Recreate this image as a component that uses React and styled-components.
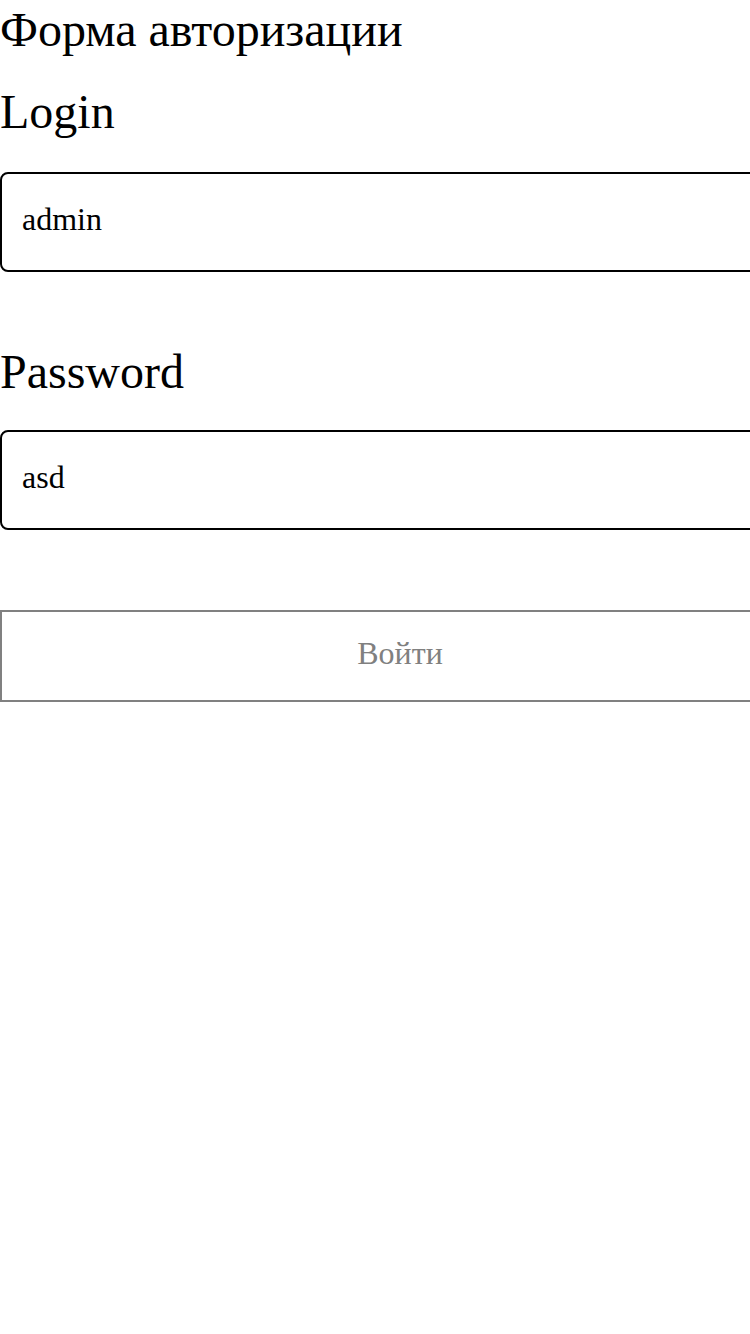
import styled, { createGlobalStyle } from 'styled-components'

const GlobalStyle = createGlobalStyle`
  html, body {
    margin: 0;
    padding: 0;
    overflow-x: hidden;
    background: #ffffff;
  }
  body {
    font-family: 'Liberation Serif', 'Times New Roman', serif;
    color: #000000;
  }
`

const Form = styled.form`
  display: flex;
  flex-direction: column;
  width: 800px;
`

const Title = styled.h1`
  margin: 2px 0 0;
  font-size: 48px;
  font-weight: normal;
  line-height: 55px;
`

const Field = styled.label`
  display: flex;
  flex-direction: column;
  gap: ${(p) => p.$gap}px;
  margin-top: ${(p) => p.$top}px;
`

const Label = styled.span`
  font-size: 48px;
  line-height: 55px;
`

const Input = styled.input`
  box-sizing: border-box;
  width: 100%;
  height: 100px;
  padding: 0 20px 6px;
  border: 2px solid #000000;
  border-radius: 8px;
  font-family: inherit;
  font-size: 32px;
  color: #000000;
  background: #ffffff;
  outline: none;
`

const Button = styled.button`
  box-sizing: border-box;
  width: 100%;
  height: 92px;
  margin-top: 80px;
  padding: 0 0 6px;
  border: 2px solid #808080;
  background: #ffffff;
  font-family: inherit;
  font-size: 32px;
  color: #808080;
`

const App = () => {
  return (
    <>
      <GlobalStyle />
      <Form onSubmit={(e) => e.preventDefault()}>
        <Title>Форма авторизации</Title>
        <Field $top={27} $gap={33}>
          <Label>Login</Label>
          <Input type='text' defaultValue='admin' />
        </Field>
        <Field $top={72} $gap={31}>
          <Label>Password</Label>
          <Input type='text' defaultValue='asd' />
        </Field>
        <Button type='submit' disabled>
          Войти
        </Button>
      </Form>
    </>
  )
}

export default App
